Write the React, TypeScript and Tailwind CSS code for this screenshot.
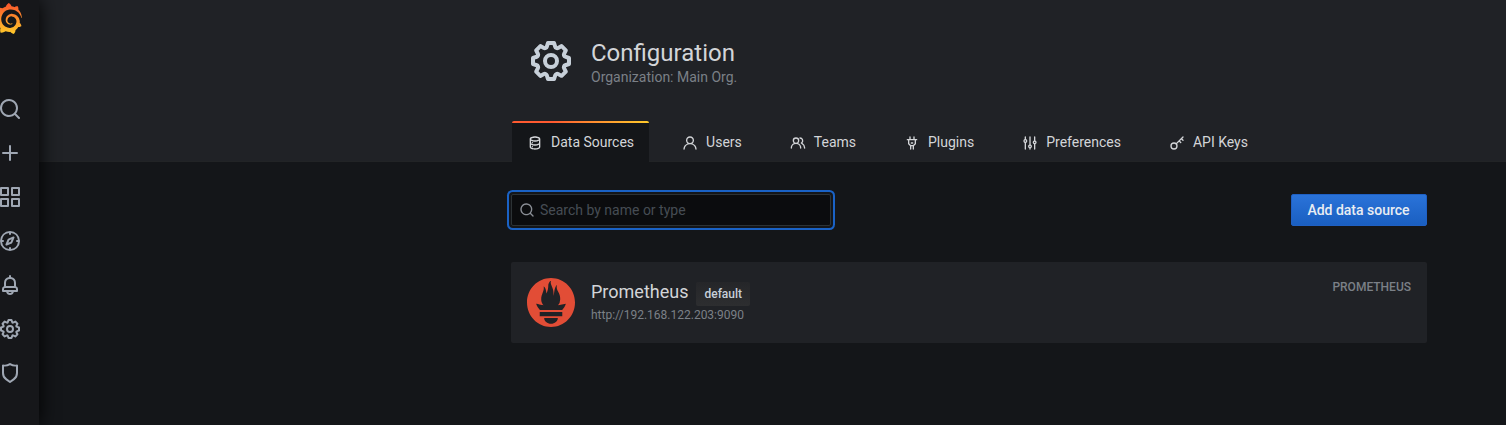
import type { ReactNode } from 'react';
import { SiGrafana, SiPrometheus } from 'react-icons/si';

const paths = {
  search:
    'M21.71,20.29,18,16.61A9,9,0,1,0,16.61,18l3.68,3.68a1,1,0,0,0,1.42,0A1,1,0,0,0,21.71,20.29ZM11,18a7,7,0,1,1,7-7A7,7,0,0,1,11,18Z',
  plus: 'M19,11H13V5a1,1,0,0,0-2,0v6H5a1,1,0,0,0,0,2h6v6a1,1,0,0,0,2,0V13h6a1,1,0,0,0,0-2Z',
  apps: 'M10,13H3a1,1,0,0,0-1,1v7a1,1,0,0,0,1,1h7a1,1,0,0,0,1-1V14A1,1,0,0,0,10,13ZM9,20H4V15H9ZM21,2H14a1,1,0,0,0-1,1v7a1,1,0,0,0,1,1h7a1,1,0,0,0,1-1V3A1,1,0,0,0,21,2ZM20,9H15V4h5Zm1,4H14a1,1,0,0,0-1,1v7a1,1,0,0,0,1,1h7a1,1,0,0,0,1-1V14A1,1,0,0,0,21,13Zm-1,7H15V15h5ZM10,2H3A1,1,0,0,0,2,3v7a1,1,0,0,0,1,1h7a1,1,0,0,0,1-1V3A1,1,0,0,0,10,2ZM9,9H4V4H9Z',
  compass:
    'M12,2A10,10,0,1,0,22,12,10,10,0,0,0,12,2Zm1,17.93V19a1,1,0,0,0-2,0v.93A8,8,0,0,1,4.07,13H5a1,1,0,0,0,0-2H4.07A8,8,0,0,1,11,4.07V5a1,1,0,0,0,2,0V4.07A8,8,0,0,1,19.93,11H19a1,1,0,0,0,0,2h.93A8,8,0,0,1,13,19.93ZM15.14,7.55l-5,2.12a1,1,0,0,0-.52.52l-2.12,5a1,1,0,0,0,.21,1.1,1,1,0,0,0,.7.3.93.93,0,0,0,.4-.09l5-2.12a1,1,0,0,0,.52-.52l2.12-5a1,1,0,0,0-1.31-1.31Zm-2.49,5.1-2.28,1,1-2.28,2.28-1Z',
  bell: 'M18,13.18V10a6,6,0,0,0-5-5.91V3a1,1,0,0,0-2,0V4.09A6,6,0,0,0,6,10v3.18A3,3,0,0,0,4,16v2a1,1,0,0,0,1,1H8.14a4,4,0,0,0,7.72,0H19a1,1,0,0,0,1-1V16A3,3,0,0,0,18,13.18ZM8,10a4,4,0,0,1,8,0v3H8Zm4,10a2,2,0,0,1-1.72-1h3.44A2,2,0,0,1,12,20Zm6-3H6V16a1,1,0,0,1,1-1H17a1,1,0,0,1,1,1Z',
  cog: 'M21.32,9.55l-1.89-.63.89-1.78A1,1,0,0,0,20.13,6L18,3.87a1,1,0,0,0-1.15-.19l-1.78.89-.63-1.89A1,1,0,0,0,13.5,2h-3a1,1,0,0,0-.95.68L8.92,4.57,7.14,3.68A1,1,0,0,0,6,3.87L3.87,6a1,1,0,0,0-.19,1.15l.89,1.78-1.89.63A1,1,0,0,0,2,10.5v3a1,1,0,0,0,.68.95l1.89.63-.89,1.78A1,1,0,0,0,3.87,18L6,20.13a1,1,0,0,0,1.15.19l1.78-.89.63,1.89a1,1,0,0,0,.95.68h3a1,1,0,0,0,.95-.68l.63-1.89,1.78.89A1,1,0,0,0,18,20.13L20.13,18a1,1,0,0,0,.19-1.15l-.89-1.78,1.89-.63A1,1,0,0,0,22,13.5v-3A1,1,0,0,0,21.32,9.55ZM20,12.78l-1.2.4A2,2,0,0,0,17.64,16l.57,1.14-1.1,1.1L16,17.64a2,2,0,0,0-2.79,1.16l-.4,1.2H11.22l-.4-1.2A2,2,0,0,0,8,17.64l-1.14.57-1.1-1.1L6.36,16A2,2,0,0,0,5.2,13.18L4,12.78V11.22l1.2-.4A2,2,0,0,0,6.36,8L5.79,6.89l1.1-1.1L8,6.36A2,2,0,0,0,10.82,5.2l.4-1.2h1.56l.4,1.2A2,2,0,0,0,16,6.36l1.14-.57,1.1,1.1L17.64,8a2,2,0,0,0,1.16,2.79l1.2.4ZM12,8a4,4,0,1,0,4,4A4,4,0,0,0,12,8Zm0,6a2,2,0,1,1,2-2A2,2,0,0,1,12,14Z',
  shield:
    'M19.63,3.65a1,1,0,0,0-.84-.2,8,8,0,0,1-6.22-1.27,1,1,0,0,0-1.14,0A8,8,0,0,1,5.21,3.45a1,1,0,0,0-.84.2A1,1,0,0,0,4,4.43v7.45a9,9,0,0,0,3.77,7.33l3.65,2.6a1,1,0,0,0,1.16,0l3.65-2.6A9,9,0,0,0,20,11.88V4.43A1,1,0,0,0,19.63,3.65ZM18,11.88a7,7,0,0,1-2.93,5.7L12,19.77,8.93,17.58A7,7,0,0,1,6,11.88V5.58a10,10,0,0,0,6-1.39,10,10,0,0,0,6,1.39Z',
  database:
    'M8,16.5a1,1,0,1,0,1,1A1,1,0,0,0,8,16.5ZM12,2C8,2,4,3.37,4,6V18c0,2.63,4,4,8,4s8-1.37,8-4V6C20,3.37,16,2,12,2Zm6,16c0,.71-2.28,2-6,2s-6-1.29-6-2V14.73A13.16,13.16,0,0,0,12,16a13.16,13.16,0,0,0,6-1.27Zm0-6c0,.71-2.28,2-6,2s-6-1.29-6-2V8.73A13.16,13.16,0,0,0,12,10a13.16,13.16,0,0,0,6-1.27ZM12,8C8.28,8,6,6.71,6,6s2.28-2,6-2,6,1.29,6,2S15.72,8,12,8ZM8,10.5a1,1,0,1,0,1,1A1,1,0,0,0,8,10.5Z',
  user: 'M15.71,12.71a6,6,0,1,0-7.42,0,10,10,0,0,0-6.22,8.18,1,1,0,0,0,2,.22,8,8,0,0,1,15.9,0,1,1,0,0,0,1,.89h.11a1,1,0,0,0,.88-1.1A10,10,0,0,0,15.71,12.71ZM12,12a4,4,0,1,1,4-4A4,4,0,0,1,12,12Z',
  users:
    'M12.3,12.22A4.92,4.92,0,0,0,14,8.5a5,5,0,0,0-10,0,4.92,4.92,0,0,0,1.7,3.72A8,8,0,0,0,1,19.5a1,1,0,0,0,2,0,6,6,0,0,1,12,0,1,1,0,0,0,2,0A8,8,0,0,0,12.3,12.22ZM9,11.5a3,3,0,1,1,3-3A3,3,0,0,1,9,11.5Zm9.74.32A5,5,0,0,0,15,3.5a1,1,0,0,0,0,2,3,3,0,0,1,3,3,3,3,0,0,1-1.5,2.59,1,1,0,0,0-.5.84,1,1,0,0,0,.45.86l.39.26.13.07a7,7,0,0,1,4,6.38,1,1,0,0,0,2,0A9,9,0,0,0,18.74,11.82Z',
  plug: 'M19,6H16V3a1,1,0,0,0-2,0V6H10V3A1,1,0,0,0,8,3V6H5A1,1,0,0,0,5,8H6v5a1,1,0,0,0,.29.71L9,16.41V21a1,1,0,0,0,2,0V17h2v4a1,1,0,0,0,2,0V16.41l2.71-2.7A1,1,0,0,0,18,13V8h1a1,1,0,0,0,0-2Zm-3,6.59L13.59,15H10.41L8,12.59V8h8ZM11,13h2a1,1,0,0,0,0-2H11a1,1,0,0,0,0,2Z',
  sliders:
    'M20,8.18V3a1,1,0,0,0-2,0V8.18a3,3,0,0,0,0,5.64V21a1,1,0,0,0,2,0V13.82a3,3,0,0,0,0-5.64ZM19,12a1,1,0,1,1,1-1A1,1,0,0,1,19,12Zm-6,2.18V3a1,1,0,0,0-2,0V14.18a3,3,0,0,0,0,5.64V21a1,1,0,0,0,2,0V19.82a3,3,0,0,0,0-5.64ZM12,18a1,1,0,1,1,1-1A1,1,0,0,1,12,18ZM6,6.18V3A1,1,0,0,0,4,3V6.18a3,3,0,0,0,0,5.64V21a1,1,0,0,0,2,0V11.82A3,3,0,0,0,6,6.18ZM5,10A1,1,0,1,1,6,9,1,1,0,0,1,5,10Z',
};

type IconName = keyof typeof paths;

function Icon({ name, className }: { name: IconName; className: string }) {
  return (
    <svg viewBox="0 0 24 24" fill="currentColor" className={className}>
      <path d={paths[name]} />
    </svg>
  );
}

function KeyIcon() {
  return (
    <svg
      viewBox="0 0 24 24"
      fill="none"
      stroke="currentColor"
      strokeWidth="2"
      strokeLinecap="round"
      strokeLinejoin="round"
      className="size-4 shrink-0"
    >
      <circle cx="7.5" cy="16.5" r="4.5" />
      <path d="M10.7 13.3 21 3M15.2 8.8l2.4 2.4M18.6 5.4 21 7.8" />
    </svg>
  );
}

function Tab({ icon, label, active }: { icon: ReactNode; label: string; active?: boolean }) {
  return (
    <li
      className={
        active
          ? 'flex h-[41px] flex-col overflow-hidden rounded-t-[2px] bg-[#141619]'
          : 'flex h-[41px] flex-col pt-0.5'
      }
    >
      {active && <span className="h-0.5 bg-linear-to-r from-[#ff5a30] from-30% to-[#ffca2a]" />}
      <a className="flex flex-1 items-center gap-2 px-[15px] text-sm leading-[21px]">
        <span className="pt-px">{icon}</span>
        {label}
      </a>
    </li>
  );
}

const navItems: IconName[] = ['search', 'plus', 'apps', 'compass', 'bell', 'cog', 'shield'];

export default function App() {
  return (
    <div className="flex h-[425px] overflow-hidden bg-[#141619] font-[Roboto,sans-serif] text-[#d3d5d8]">
      <svg className="absolute size-0" aria-hidden="true">
        <linearGradient id="flame" x1="0" y1="1" x2="0" y2="0">
          <stop offset="0" stopColor="#ffca2a" />
          <stop offset="1" stopColor="#f9532c" />
        </linearGradient>
      </svg>

      <nav className="relative z-10 -ml-[19px] flex w-[58px] shrink-0 flex-col items-center bg-[#16171a] shadow-[0_0_20px_#000000]">
        <div className="flex h-[87px] w-full justify-center pt-[3px] pr-[5px]">
          <SiGrafana className="size-[31px]" style={{ fill: 'url(#flame)' }} />
        </div>
        {navItems.map((name) => (
          <a key={name} className="flex h-11 items-center justify-center text-[#9fa7b3]">
            <Icon name={name} className="size-6" />
          </a>
        ))}
      </nav>

      <main className="flex min-w-0 flex-1 flex-col">
        <header className="flex h-[162px] shrink-0 flex-col justify-between border-b border-[#222426] bg-[#202226] pl-[472px]">
          <div className="flex items-start pt-[37px] pl-4">
            <Icon name="cog" className="size-12 text-[#c7d0d9]" />
            <div className="ml-4 pt-px">
              <h1 className="text-2xl leading-[30px]">Configuration</h1>
              <div className="text-sm leading-[18px] text-[#7b8087]">Organization: Main Org.</div>
            </div>
          </div>
          <ul className="-mb-px ml-px flex gap-[18px]">
            <Tab active icon={<Icon name="database" className="size-4" />} label="Data Sources" />
            <Tab icon={<Icon name="user" className="size-4" />} label="Users" />
            <Tab icon={<Icon name="users" className="size-4" />} label="Teams" />
            <Tab icon={<Icon name="plug" className="size-4" />} label="Plugins" />
            <Tab icon={<Icon name="sliders" className="size-4" />} label="Preferences" />
            <Tab icon={<KeyIcon />} label="API Keys" />
          </ul>
        </header>

        <section className="ml-[472px] flex w-[916px] flex-col pt-8">
          <div className="flex items-center justify-between">
            <label className="flex h-8 w-[320px] items-center rounded-[2px] border border-[#2c3235] bg-[#0b0c0e] pl-[7px] shadow-[0_0_0_2px_#141619,0_0_0_4px_#1a62c5]">
              <Icon name="search" className="size-4 shrink-0 text-[#8a8e95]" />
              <input
                placeholder="Search by name or type"
                className="ml-[5px] min-w-0 flex-1 bg-transparent text-sm outline-none placeholder:text-[#464c54]"
              />
            </label>
            <button className="h-8 w-[136px] rounded-[2px] border border-[#1f60c4] bg-linear-to-b from-[#2a73d9] to-[#1a5fc1] pr-px text-sm font-medium text-[#e9edf2]">
              Add data source
            </button>
          </div>

          <article className="mt-9 flex h-[81px] rounded-[2px] bg-[#202226] px-4 pt-4">
            <SiPrometheus className="h-[49px] w-12 text-[#e24d36]" preserveAspectRatio="none" />
            <div className="ml-4">
              <div className="flex h-7 items-center gap-2">
                <h2 className="text-lg leading-7">Prometheus</h2>
                <span className="mt-1 flex h-6 items-center rounded-[2px] bg-linear-to-b from-[#252629] to-[#2d2e30] px-2 text-xs font-medium text-[#c7d0d9]">
                  default
                </span>
              </div>
              <div className="text-xs leading-[18px] text-[#7b8087]">http://192.168.122.203:9090</div>
            </div>
            <div className="ml-auto text-xs leading-[18px] font-medium text-[#7b8087]">PROMETHEUS</div>
          </article>
        </section>
      </main>
    </div>
  );
}
